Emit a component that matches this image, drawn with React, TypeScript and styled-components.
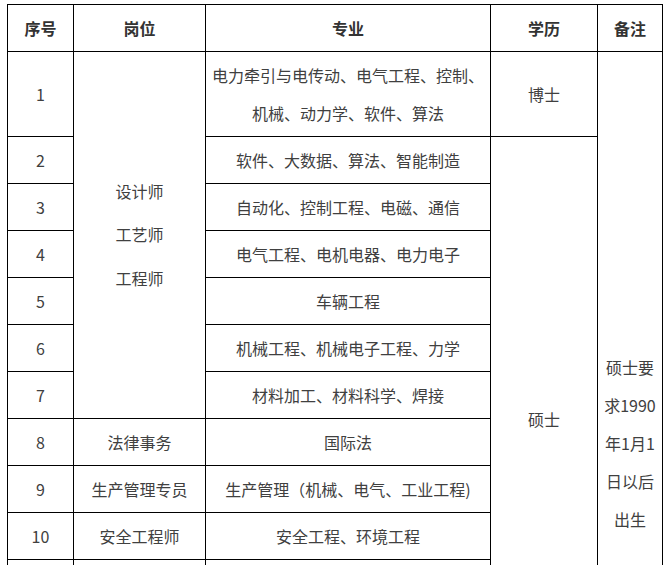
import styled, { createGlobalStyle } from "styled-components";

const GlobalStyle = createGlobalStyle`
  html, body {
    margin: 0;
    padding: 0;
    background-color: #ffffff;
  }
  body {
    font-family: "Noto Sans CJK SC", "Noto Sans", sans-serif;
    color: #333333;
  }
`;

type Row = {
  no: string;
  post?: string;
  major: string;
};

const rows: Row[] = [
  { no: "2", major: "软件、大数据、算法、智能制造" },
  { no: "3", major: "自动化、控制工程、电磁、通信" },
  { no: "4", major: "电气工程、电机电器、电力电子" },
  { no: "5", major: "车辆工程" },
  { no: "6", major: "机械工程、机械电子工程、力学" },
  { no: "7", major: "材料加工、材料科学、焊接" },
  { no: "8", post: "法律事务", major: "国际法" },
  { no: "9", post: "生产管理专员", major: "生产管理（机械、电气、工业工程)" },
  { no: "10", post: "安全工程师", major: "安全工程、环境工程" },
];

const App = (): JSX.Element => {
  return (
    <>
      <GlobalStyle />
      <Page>
        <Table>
          <colgroup>
            <col style={{ width: 66 }} />
            <col style={{ width: 132 }} />
            <col style={{ width: 285 }} />
            <col style={{ width: 107 }} />
            <col style={{ width: 65 }} />
          </colgroup>
          <thead>
            <HeadRow>
              <Th>序号</Th>
              <Th>岗位</Th>
              <Th>专业</Th>
              <Th>学历</Th>
              <Th>备注</Th>
            </HeadRow>
          </thead>
          <tbody>
            <TallRow>
              <Td>1</Td>
              <Td rowSpan={7}>
                <Lines $gap={43.5}>
                  <span>设计师</span>
                  <span>工艺师</span>
                  <span>工程师</span>
                </Lines>
              </Td>
              <Td>
                <Lines $gap={38}>
                  <span>电力牵引与电传动、电气工程、控制、</span>
                  <span>机械、动力学、软件、算法</span>
                </Lines>
              </Td>
              <Td>博士</Td>
              <Td rowSpan={16} $bottom={8}>
                <Lines $gap={38}>
                  <span>硕士要</span>
                  <span>求1990</span>
                  <span>年1月1</span>
                  <span>日以后</span>
                  <span>出生</span>
                </Lines>
              </Td>
            </TallRow>
            {rows.map((row, i) => (
              <BodyRow key={row.no}>
                <Td>{row.no}</Td>
                {row.post && <Td>{row.post}</Td>}
                <Td>{row.major}</Td>
                {i === 0 && <Td rowSpan={12}>硕士</Td>}
              </BodyRow>
            ))}
            {[11, 12, 13, 14, 15, 16].map((n) => (
              <BodyRow key={n}>
                <Td />
                <Td />
                <Td />
                {n === 14 && <Td rowSpan={3} />}
              </BodyRow>
            ))}
          </tbody>
        </Table>
      </Page>
    </>
  );
};

const Page = styled.div`
  padding: 4px 0 0 7px;
  height: 565px;
  overflow: hidden;
  box-sizing: border-box;
`;

const Table = styled.table`
  width: 655px;
  table-layout: fixed;
  border-collapse: collapse;
  font-size: 16px;
  color: #404040;
`;

const HeadRow = styled.tr`
  height: 47px;
`;

const TallRow = styled.tr`
  height: 85px;
`;

const BodyRow = styled.tr`
  height: 47px;
`;

const Th = styled.th`
  border: 1px solid #000000;
  padding: 0;
  font-weight: 700;
  color: #333333;
  text-align: center;
  vertical-align: middle;
  line-height: 22px;
`;

const Td = styled.td<{ $bottom?: number }>`
  border: 1px solid #000000;
  padding: 0 4px ${(p) => p.$bottom ?? 0}px;
  text-align: center;
  vertical-align: middle;
  line-height: 22px;
  white-space: nowrap;
`;

const Lines = styled.div<{ $gap: number }>`
  display: flex;
  flex-direction: column;
  align-items: center;
  line-height: ${(p) => p.$gap}px;
`;

export default App;
